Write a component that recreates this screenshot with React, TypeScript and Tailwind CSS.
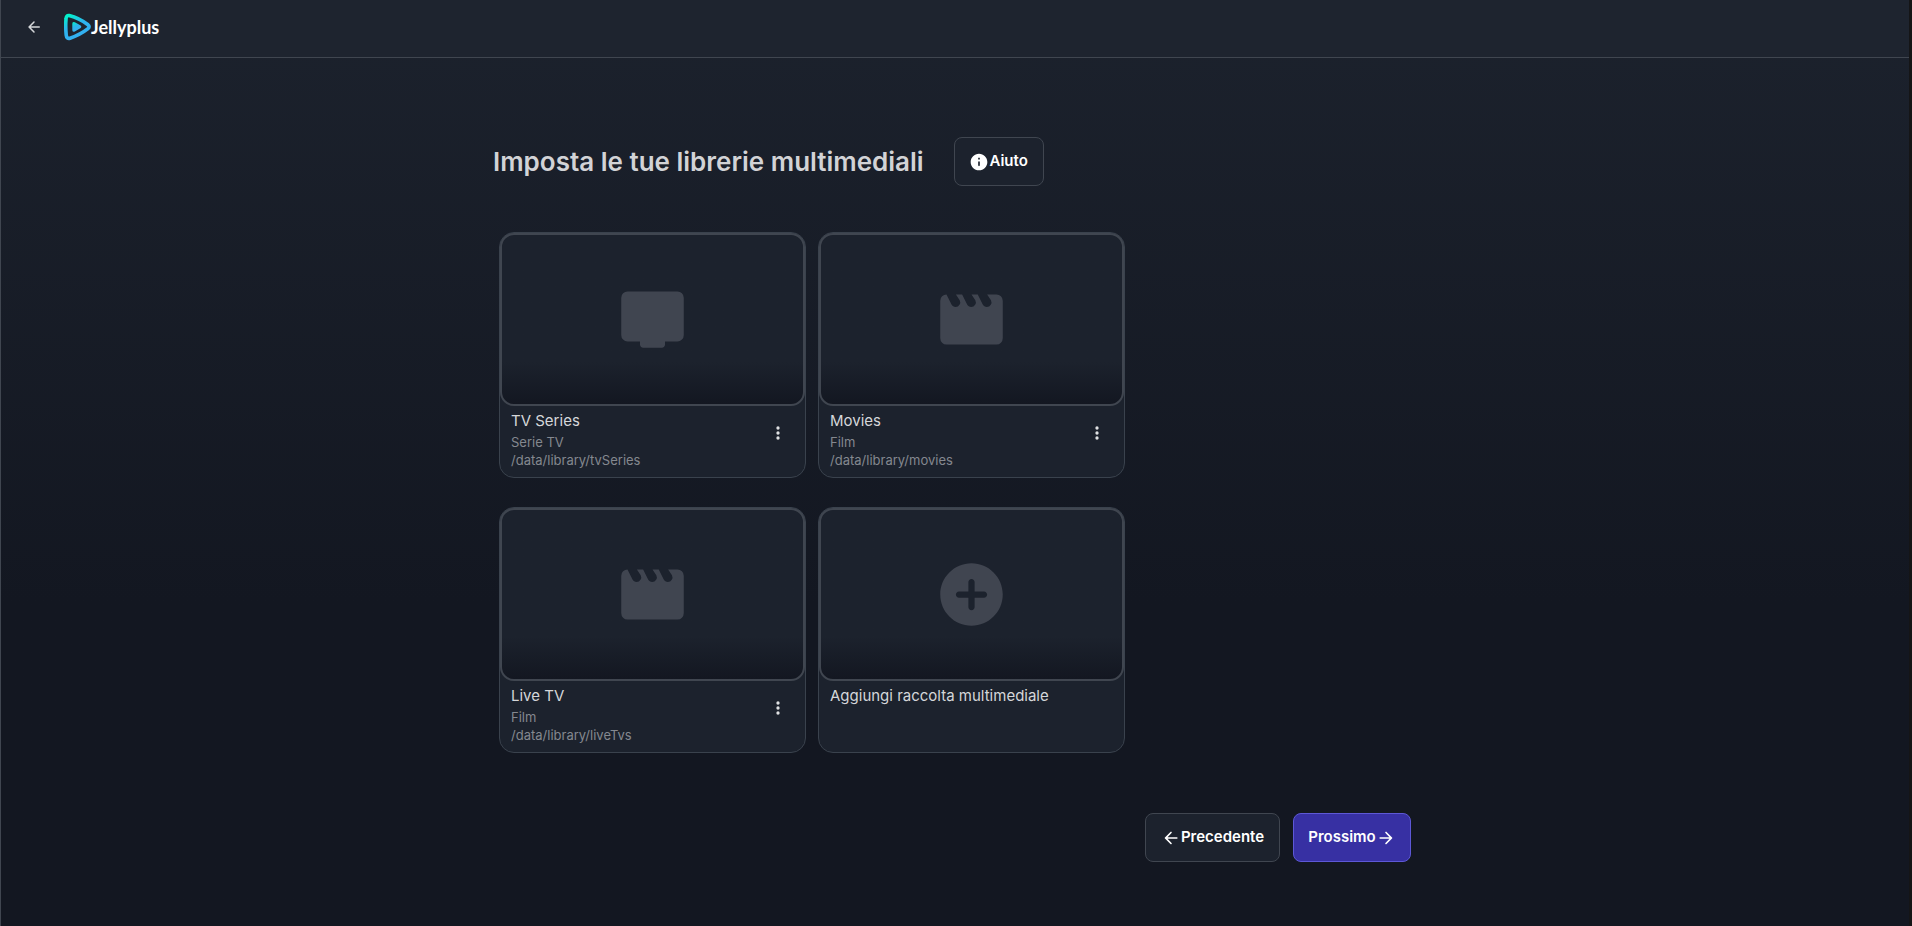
import React from "react";

type IconProps = { className?: string };

const Svg = ({ className, children }: IconProps & { children: React.ReactNode }) => (
  <svg viewBox="0 0 24 24" fill="currentColor" aria-hidden="true" className={className}>
    {children}
  </svg>
);

const ArrowLeft = ({ className }: IconProps) => (
  <Svg className={className}>
    <path d="M19 11H7.83l4.88-4.88c.39-.39.39-1.03 0-1.42a.996.996 0 0 0-1.41 0l-6.59 6.59a.996.996 0 0 0 0 1.41l6.59 6.59a.996.996 0 1 0 1.41-1.41L7.83 13H19c.55 0 1-.45 1-1s-.45-1-1-1z" />
  </Svg>
);

const ArrowRight = ({ className }: IconProps) => (
  <Svg className={className}>
    <path d="M5 13h11.17l-4.88 4.88c-.39.39-.39 1.03 0 1.42.39.39 1.02.39 1.41 0l6.59-6.59a.996.996 0 0 0 0-1.41l-6.58-6.6a.996.996 0 1 0-1.41 1.41L16.17 11H5c-.55 0-1 .45-1 1s.45 1 1 1z" />
  </Svg>
);

const Info = ({ className }: IconProps) => (
  <Svg className={className}>
    <path d="M12 2C6.48 2 2 6.48 2 12s4.48 10 10 10 10-4.48 10-10S17.52 2 12 2zm0 15c-.55 0-1-.45-1-1v-4c0-.55.45-1 1-1s1 .45 1 1v4c0 .55-.45 1-1 1zm1-8h-2V7h2v2z" />
  </Svg>
);

const More = ({ className }: IconProps) => (
  <Svg className={className}>
    <circle cx="12" cy="6" r="2" />
    <circle cx="12" cy="12" r="2" />
    <circle cx="12" cy="18" r="2" />
  </Svg>
);

const Tv = ({ className }: IconProps) => (
  <Svg className={className}>
    <path d="M4 3h16q.825 0 1.413.588T22 5v12q0 .825-.587 1.413T20 19h-4v1q0 .425-.288.713T15 21H9q-.425 0-.713-.288T8 20v-1H4q-.825 0-1.412-.587T2 17V5q0-.825.588-1.412T4 3z" />
  </Svg>
);

const Movie = ({ className }: IconProps) => (
  <Svg className={className}>
    <path d="m4 4l1.6 3.2q.2.375.538.588t.762.212q.825 0 1.263-.7t.062-1.45L7 4h2l1.6 3.2q.2.375.538.588t.762.212q.825 0 1.263-.7t.062-1.45L12 4h2l1.6 3.2q.2.375.538.588t.762.212q.825 0 1.263-.7t.062-1.45L17 4h3q.825 0 1.413.588T22 6v12q0 .825-.587 1.413T20 20H4q-.825 0-1.412-.587T2 18V6q0-.825.588-1.412T4 4" />
  </Svg>
);

const AddCircle = ({ className }: IconProps) => (
  <Svg className={className}>
    <path d="M12 2C6.48 2 2 6.48 2 12s4.48 10 10 10 10-4.48 10-10S17.52 2 12 2zm4 11h-3v3c0 .55-.45 1-1 1s-1-.45-1-1v-3H8c-.55 0-1-.45-1-1s.45-1 1-1h3V8c0-.55.45-1 1-1s1 .45 1 1v3h3c.55 0 1 .45 1 1s-.45 1-1 1z" />
  </Svg>
);

const Logo = () => (
  <a href="#" className="flex items-center text-white" aria-label="Jellyplus">
    <svg viewBox="0 0 27 28" className="h-7 w-[27px]" aria-hidden="true">
      <defs>
        <linearGradient id="logo" x1="0" y1="0" x2="0.5" y2="1">
          <stop offset="0" stopColor="#00f5c8" />
          <stop offset="0.5" stopColor="#2db4ee" />
          <stop offset="1" stopColor="#34b0f2" />
        </linearGradient>
      </defs>
      <path
        d="M5.2 2.6Q2.2 2.2 2 6Q1.4 14 2.2 22Q2.6 26.2 6 25.2Q16.5 21.5 24 15.6Q26.2 13.8 24 11.8Q15 5 5.2 2.6Z"
        fill="none"
        stroke="url(#logo)"
        strokeWidth="3.6"
        strokeLinejoin="round"
      />
      <path d="M8.3 11Q8.2 8.2 10.8 9.3L16.3 12.3Q18.3 13.8 16.3 15.3L10.8 18.5Q8.2 19.6 8.3 16.8Z" fill="url(#logo)" />
    </svg>
    <span className="font-[Lato] text-lg leading-6 font-bold">Jellyplus</span>
  </a>
);

type Library = {
  title: string;
  kind?: string;
  path?: string;
  Icon: (p: IconProps) => React.ReactNode;
};

const libraries: Library[] = [
  { title: "TV Series", kind: "Serie TV", path: "/data/library/tvSeries", Icon: Tv },
  { title: "Movies", kind: "Film", path: "/data/library/movies", Icon: Movie },
  { title: "Live TV", kind: "Film", path: "/data/library/liveTvs", Icon: Movie },
  { title: "Aggiungi raccolta multimediale", Icon: AddCircle },
];

const LibraryCard = ({ title, kind, path, Icon }: Library) => (
  <article className="flex h-[246px] w-[307px] flex-col rounded-[15px] border border-[#3a424d] bg-[#1c222d]">
    <button
      type="button"
      aria-label={title}
      className="flex h-[173px] items-center justify-center rounded-[14px] border-2 border-[#404650] bg-linear-to-b from-[#1c222d] from-75% to-[#131721] text-[#404550]"
    >
      <Icon className="size-[75px]" />
    </button>
    <div className="flex items-start justify-between pt-[3px] pr-[17px] pl-[11px]">
      <div>
        <h2 className="text-[15px] leading-6 text-[#d5d7da]">{title}</h2>
        {kind && <p className="text-[13px] leading-[18px] text-[#84888f]">{kind}</p>}
        {path && <p className="text-[13px] leading-[18px] text-[#84888f]">{path}</p>}
      </div>
      {kind && (
        <button type="button" aria-label={"Opzioni " + title} className="mt-3.5 text-[#e0e1e3]">
          <More className="size-5" />
        </button>
      )}
    </div>
  </article>
);

const buttonBase =
  "flex h-[49px] items-center justify-center rounded-lg border text-[15px] font-semibold text-white";

export default function App() {
  return (
    <div className="min-h-screen bg-[#151516] pr-[3px] font-[Inter,sans-serif]">
      <div className="flex min-h-screen flex-col border-l border-[#404650] bg-linear-to-b from-[#1c222d] to-[#131721] to-65%">
        <header className="flex h-[58px] items-center gap-[21px] border-b border-[#404650] bg-[#1e242f] pb-1 pl-6">
          <button type="button" aria-label="Indietro" className="text-[#d5d7da]">
            <ArrowLeft className="size-[18px]" />
          </button>
          <Logo />
        </header>
        <main className="flex flex-1 justify-center pt-[79px] pr-1.5">
          <div className="w-full max-w-[918px]">
            <div className="flex items-center gap-[30px]">
              <h1 className="text-[26px] leading-9 font-semibold text-[#d2d3d6]">
                Imposta le tue librerie multimediali
              </h1>
              <button type="button" className={buttonBase + " w-[90px] border-[#404650] bg-[#1c222d]"}>
                <Info className="size-5" />
                Aiuto
              </button>
            </div>
            <div className="mt-[46px] ml-1.5 flex w-fit flex-wrap gap-x-3 gap-y-[29px] md:grid md:grid-cols-2">
              {libraries.map((lib) => (
                <LibraryCard key={lib.title} {...lib} />
              ))}
            </div>
            <div className="mt-[60px] flex justify-end gap-[13px]">
              <button type="button" className={buttonBase + " w-[135px] border-[#404650] bg-[#1c222d]"}>
                <ArrowLeft className="size-5" />
                Precedente
              </button>
              <button type="button" className={buttonBase + " w-[118px] border-[#5d58d6] bg-[#3730a3]"}>
                Prossimo
                <ArrowRight className="size-5" />
              </button>
            </div>
          </div>
        </main>
      </div>
    </div>
  );
}
